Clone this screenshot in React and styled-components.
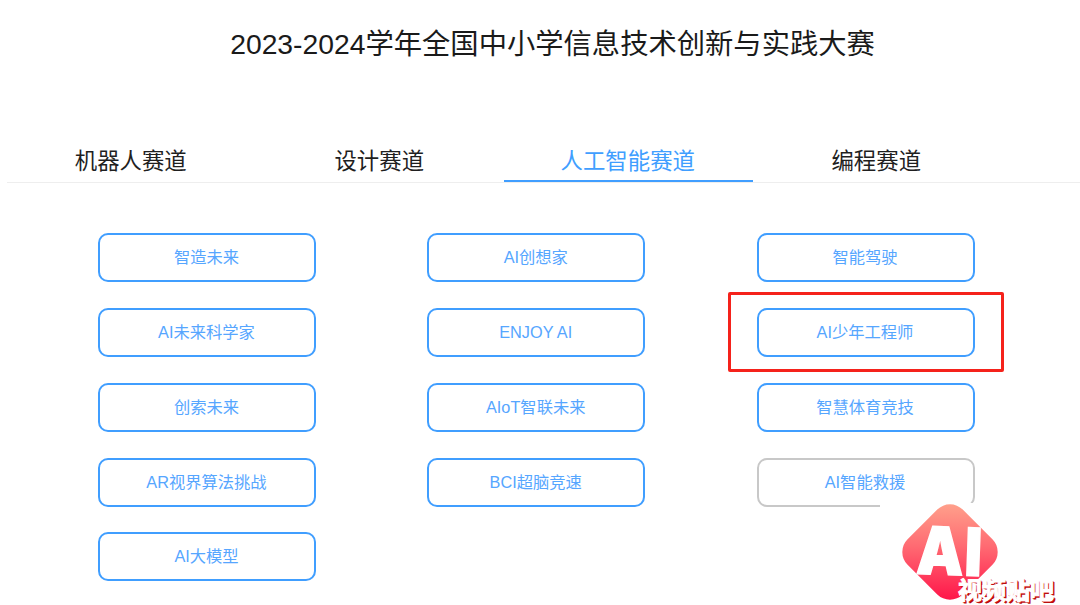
import React from 'react';
import styled, { createGlobalStyle } from 'styled-components';

const GlobalStyle = createGlobalStyle`
html, body {
    margin: 0;
    padding: 0;
    background: #fff;
}
body {
    font-family: "Liberation Sans", "Noto Sans CJK SC", sans-serif;
}
`

const Page = styled.div`
position: relative;
width: 1080px;
height: 605px;
overflow: hidden;
`
const Title = styled.h1`
margin: 0;
padding-top: 27px;
padding-left: 25px;
height: 141px;
box-sizing: border-box;
font-size: 28.3px;
line-height: 34px;
font-weight: 400;
text-align: center;
color: #1a1a1a;
`
const TabBar = styled.div`
display: flex;
margin-left: 7px;
height: 41px;
border-bottom: 1px solid #eeeeee;
`
const Tab = styled.div`
width: 248.5px;
height: 41px;
padding-right: 1px;
box-sizing: border-box;
text-align: center;
font-size: 22.4px;
line-height: 41px;
color: ${props => props.$active ? '#409eff' : '#1f1f1f'};
border-bottom: ${props => props.$active ? '2px solid #409eff' : 'none'};
`
const Grid = styled.div`
display: grid;
grid-template-columns: repeat(3, 218px);
column-gap: 111.25px;
padding: 50px 0 0 98px;
`
const Column = styled.div`
display: flex;
flex-direction: column;
gap: 25.85px;
`
const TrackButton = styled.div`
width: 218px;
height: 49px;
box-sizing: border-box;
padding: 0 1px 1px 0;
border: 2px solid ${props => props.$disabled ? '#c8c8c8' : '#409eff'};
border-radius: 10px;
display: flex;
align-items: center;
justify-content: center;
font-size: 16.3px;
line-height: 24px;
color: #56a6ff;
`
const Highlight = styled.div`
position: absolute;
left: 728px;
top: 292px;
width: 276px;
height: 80px;
box-sizing: border-box;
border: 3px solid #f5221b;
border-radius: 2px;
`
const Badge = styled.div`
position: absolute;
left: 880px;
top: 503px;
width: 180px;
height: 102px;
`
const Mask = styled.div`
width: 96px;
height: 4px;
margin-bottom: -3px;
background: #fff;
`
const Diamond = styled.div`
position: relative;
width: 96px;
height: 96px;
margin-left: 22px;
display: flex;
align-items: center;
justify-content: center;
&::before {
    content: '';
    position: absolute;
    inset: 9px;
    border-radius: 18px;
    transform: rotate(45deg);
    background: linear-gradient(135deg, #ffa98f 0%, #ff6a72 45%, #ff0a44 100%);
}
`
const AiText = styled.div`
position: relative;
font-family: "Inter", "Liberation Sans", sans-serif;
font-size: 66px;
line-height: 66px;
font-weight: 900;
letter-spacing: 1px;
color: #fff;
-webkit-text-stroke: 1.5px #fff;
transform: translateY(-1px) rotate(2deg) scaleX(0.9);
`
const BadgeLabel = styled.div`
position: absolute;
left: 78px;
top: 75px;
font-size: 24px;
line-height: 26px;
font-weight: 700;
white-space: nowrap;
color: #fff;
-webkit-text-stroke: 1px #fff;
text-shadow: 1px 1px 0 #d41414, 2px 2px 0 #b80e0e;
`

const columns = [
    [
        { name: '智造未来' },
        { name: 'AI未来科学家' },
        { name: '创索未来' },
        { name: 'AR视界算法挑战' },
        { name: 'AI大模型' },
    ],
    [
        { name: 'AI创想家' },
        { name: 'ENJOY AI' },
        { name: 'AIoT智联未来' },
        { name: 'BCI超脑竞速' },
    ],
    [
        { name: '智能驾驶' },
        { name: 'AI少年工程师' },
        { name: '智慧体育竞技' },
        { name: 'AI智能救援', disabled: true },
    ],
]

const tabs = ['机器人赛道', '设计赛道', '人工智能赛道', '编程赛道']

export default function App() {
    return (
        <Page>
            <GlobalStyle />
            <Title>2023-2024学年全国中小学信息技术创新与实践大赛</Title>
            <TabBar>
                {tabs.map((tab, i) => (
                    <Tab key={tab} $active={i === 2}>{tab}</Tab>
                ))}
            </TabBar>
            <Grid>
                {columns.map((col, i) => (
                    <Column key={i}>
                        {col.map(item => (
                            <TrackButton key={item.name} $disabled={item.disabled}>{item.name}</TrackButton>
                        ))}
                    </Column>
                ))}
            </Grid>
            <Highlight />
            <Badge>
                <Mask />
                <Diamond>
                    <AiText>AI</AiText>
                </Diamond>
                <BadgeLabel>视频贴吧</BadgeLabel>
            </Badge>
        </Page>
    )
}
